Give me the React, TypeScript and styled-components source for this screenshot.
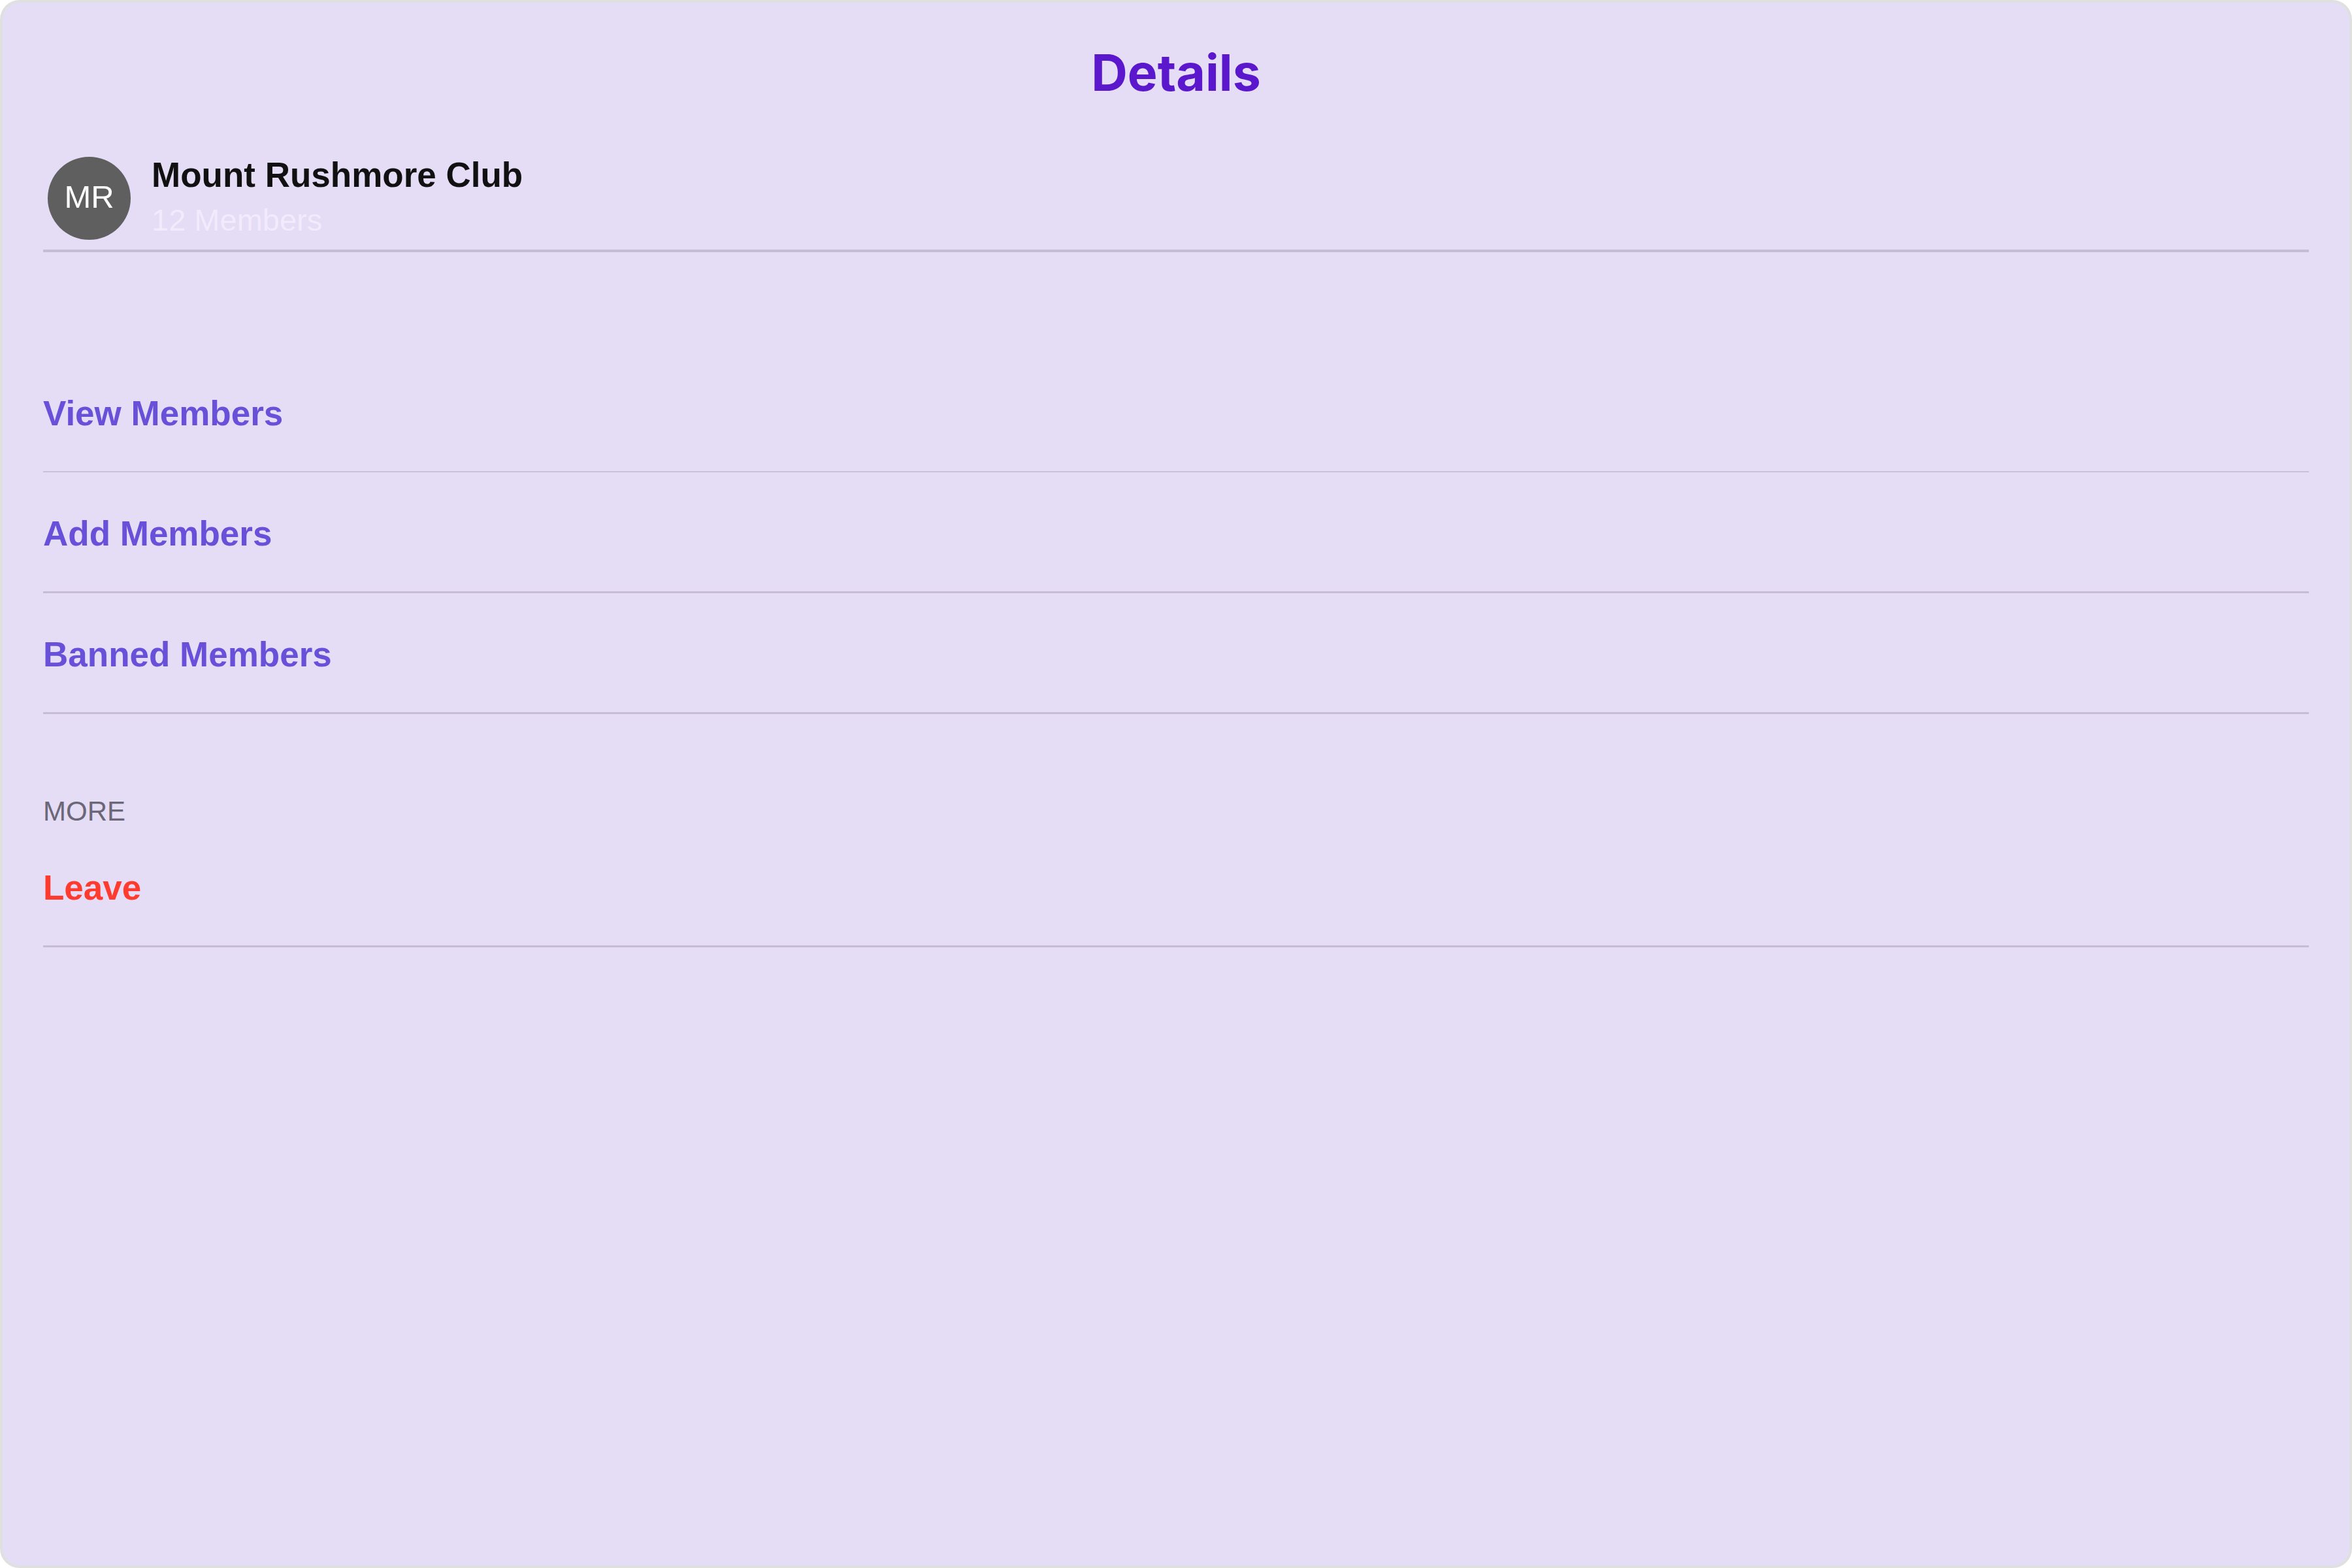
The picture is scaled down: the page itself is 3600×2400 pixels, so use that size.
import React from "react";
import styled, { createGlobalStyle } from "styled-components";

const GlobalStyle = createGlobalStyle`
  html,
  body {
    margin: 0;
    padding: 0;
    background: #ffffff;
  }
  body {
    font-family: "Liberation Sans", Arial, sans-serif;
  }
`;

const Card = styled.div`
  box-sizing: border-box;
  display: flex;
  flex-direction: column;
  width: 3600px;
  height: 2400px;
  padding: 0 62px;
  border: 4px solid #e0e0e0;
  border-radius: 30px;
  background: #e5dcf6;
  overflow: hidden;
`;

const Title = styled.h1`
  margin: 0;
  padding-top: 61px;
  font-family: Inter, "Liberation Sans", sans-serif;
  font-size: 77px;
  font-weight: 700;
  line-height: 92px;
  color: #5a17cc;
  text-align: center;
`;

const GroupHeader = styled.div`
  display: flex;
  align-items: center;
  gap: 32px;
  margin-top: 83px;
  padding: 0 0 15px 7px;
  border-bottom: 4px solid #c6bcd6;
`;

const Avatar = styled.div`
  display: flex;
  align-items: center;
  justify-content: center;
  flex: none;
  box-sizing: border-box;
  width: 127px;
  height: 127px;
  padding-bottom: 5px;
  border-radius: 50%;
  background: #5f5f5f;
  color: #ffffff;
  font-size: 49px;
  line-height: 1;
`;

const GroupInfo = styled.div`
  display: flex;
  flex-direction: column;
  margin-top: -5px;
`;

const GroupName = styled.div`
  font-size: 53px;
  font-weight: 700;
  line-height: 60px;
  color: #111111;
`;

const GroupMeta = styled.div`
  margin-top: 12px;
  font-size: 47px;
  line-height: 54px;
  color: #f1ebfc;
`;

const Section = styled.div<{ $gap: number }>`
  display: flex;
  flex-direction: column;
  padding-top: ${(p) => p.$gap}px;
`;

const SectionLabel = styled.div`
  font-size: 42px;
  line-height: 46px;
  color: #6b6776;
  text-transform: uppercase;
`;

const Option = styled.div<{ $danger?: boolean; $hairline?: boolean }>`
  padding: 64px 0 58px;
  border-bottom: ${(p) => (p.$hairline ? 2 : 3)}px solid
    ${(p) => (p.$hairline ? "#c9c1d6" : "#c6bcd6")};
  font-size: 53px;
  font-weight: 700;
  line-height: 60px;
  color: ${(p) => (p.$danger ? "#ff3b30" : "#6850d8")};
  cursor: pointer;
`;

const memberOptions = ["View Members", "Add Members", "Banned Members"];

export default function App() {
  return (
    <>
      <GlobalStyle />
      <Card>
        <Title>Details</Title>

        <GroupHeader>
          <Avatar>MR</Avatar>
          <GroupInfo>
            <GroupName>Mount Rushmore Club</GroupName>
            <GroupMeta>12 Members</GroupMeta>
          </GroupInfo>
        </GroupHeader>

        <Section $gap={153}>
          {memberOptions.map((label, i) => (
            <Option key={label} $hairline={i === 0}>
              {label}
            </Option>
          ))}
        </Section>

        <Section $gap={126}>
          <SectionLabel>More</SectionLabel>
          <Option $danger>Leave</Option>
        </Section>
      </Card>
    </>
  );
}
